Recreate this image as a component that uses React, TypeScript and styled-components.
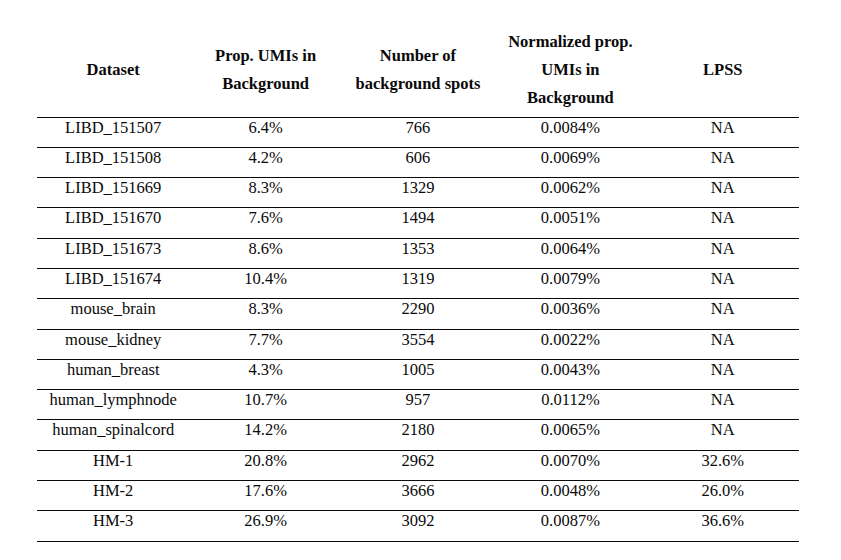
import React from 'react'
import styled, { createGlobalStyle } from 'styled-components'

const GlobalStyle = createGlobalStyle`
  html, body {
    margin: 0;
    padding: 0;
    background: #fff;
  }
  body {
    font-family: "Liberation Serif", "Times New Roman", serif;
    color: #0a0a0a;
  }
`

interface iRow {
    dataset: string
    prop: string
    spots: string
    norm: string
    lpss: string
}

const rows: iRow[] = [
    { dataset: 'LIBD_151507', prop: '6.4%', spots: '766', norm: '0.0084%', lpss: 'NA' },
    { dataset: 'LIBD_151508', prop: '4.2%', spots: '606', norm: '0.0069%', lpss: 'NA' },
    { dataset: 'LIBD_151669', prop: '8.3%', spots: '1329', norm: '0.0062%', lpss: 'NA' },
    { dataset: 'LIBD_151670', prop: '7.6%', spots: '1494', norm: '0.0051%', lpss: 'NA' },
    { dataset: 'LIBD_151673', prop: '8.6%', spots: '1353', norm: '0.0064%', lpss: 'NA' },
    { dataset: 'LIBD_151674', prop: '10.4%', spots: '1319', norm: '0.0079%', lpss: 'NA' },
    { dataset: 'mouse_brain', prop: '8.3%', spots: '2290', norm: '0.0036%', lpss: 'NA' },
    { dataset: 'mouse_kidney', prop: '7.7%', spots: '3554', norm: '0.0022%', lpss: 'NA' },
    { dataset: 'human_breast', prop: '4.3%', spots: '1005', norm: '0.0043%', lpss: 'NA' },
    { dataset: 'human_lymphnode', prop: '10.7%', spots: '957', norm: '0.0112%', lpss: 'NA' },
    { dataset: 'human_spinalcord', prop: '14.2%', spots: '2180', norm: '0.0065%', lpss: 'NA' },
    { dataset: 'HM-1', prop: '20.8%', spots: '2962', norm: '0.0070%', lpss: '32.6%' },
    { dataset: 'HM-2', prop: '17.6%', spots: '3666', norm: '0.0048%', lpss: '26.0%' },
    { dataset: 'HM-3', prop: '26.9%', spots: '3092', norm: '0.0087%', lpss: '36.6%' },
]

const Page = styled.div`
  padding: 27.5px 0 0 37px;
`

const Table = styled.div`
  width: 762px;
  border-bottom: 1px solid #0a0a0a;
`

const Row = styled.div`
  display: grid;
  grid-template-columns: repeat(5, 1fr);
`

const HeaderRow = styled(Row)`
  height: 89px;
`

const HeadCell = styled.div`
  display: flex;
  align-items: center;
  justify-content: center;
  text-align: center;
  font-weight: bold;
  font-size: 16.5px;
  line-height: 28px;
  padding-bottom: 4px;
`

const BodyRow = styled(Row)`
  height: 29.3px;
  border-top: 1px solid #0a0a0a;
`

const Cell = styled.div`
  text-align: center;
  font-size: 16.5px;
  line-height: 20px;
  white-space: nowrap;
`

export default function App() {
    return <>
        <GlobalStyle />
        <Page>
            <Table>
                <HeaderRow>
                    <HeadCell>Dataset</HeadCell>
                    <HeadCell>Prop. UMIs in<br />Background</HeadCell>
                    <HeadCell>Number of<br />background spots</HeadCell>
                    <HeadCell>Normalized prop.<br />UMIs in<br />Background</HeadCell>
                    <HeadCell>LPSS</HeadCell>
                </HeaderRow>
                {rows.map(r =>
                    <BodyRow key={r.dataset}>
                        <Cell>{r.dataset}</Cell>
                        <Cell>{r.prop}</Cell>
                        <Cell>{r.spots}</Cell>
                        <Cell>{r.norm}</Cell>
                        <Cell>{r.lpss}</Cell>
                    </BodyRow>
                )}
            </Table>
        </Page>
    </>
}
